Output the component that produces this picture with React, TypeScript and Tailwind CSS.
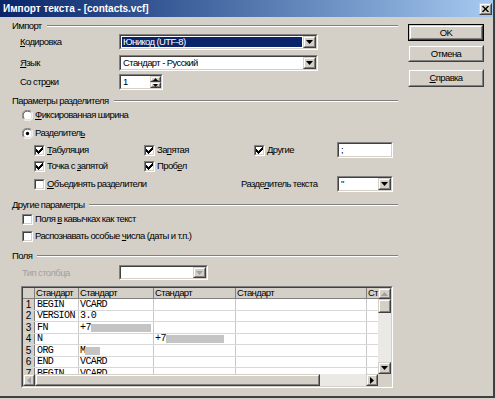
import React from "react";

type P = { className?: string; innerClass?: string; children?: React.ReactNode };

function Raised({ className = "", innerClass = "", children }: P) {
  return (
    <div className={`border border-t-[#d4d0c8] border-l-[#d4d0c8] border-b-[#404040] border-r-[#404040] ${className}`}>
      <div className={`w-full h-full border border-t-white border-l-white border-b-[#808080] border-r-[#808080] bg-[#d4d0c8] flex items-center justify-center ${innerClass}`}>
        {children}
      </div>
    </div>
  );
}

function Sunken({ className = "", innerClass = "", children }: P) {
  return (
    <div className={`border border-t-[#808080] border-l-[#808080] border-b-white border-r-white ${className}`}>
      <div className={`w-full h-full border border-t-[#404040] border-l-[#404040] border-b-[#d4d0c8] border-r-[#d4d0c8] ${innerClass}`}>
        {children}
      </div>
    </div>
  );
}

function Down({ grey = false }: { grey?: boolean }) {
  return (
    <svg width="7" height="4" viewBox="0 0 7 4">
      <polygon points="0,0 7,0 3.5,4" fill={grey ? "#a0a0a0" : "#000"} />
    </svg>
  );
}
function Up({ grey = false }: { grey?: boolean }) {
  return (
    <svg width="7" height="4" viewBox="0 0 7 4">
      <polygon points="0,4 7,4 3.5,0" fill={grey ? "#a0a0a0" : "#000"} />
    </svg>
  );
}
function Left({ grey = false }: { grey?: boolean }) {
  return (
    <svg width="4" height="7" viewBox="0 0 4 7">
      <polygon points="4,0 4,7 0,3.5" fill={grey ? "#a0a0a0" : "#000"} />
    </svg>
  );
}
function Right({ grey = false }: { grey?: boolean }) {
  return (
    <svg width="4" height="7" viewBox="0 0 4 7">
      <polygon points="0,0 0,7 4,3.5" fill={grey ? "#a0a0a0" : "#000"} />
    </svg>
  );
}

function Checkbox({ checked = false }: { checked?: boolean }) {
  return (
    <Sunken className="w-[11px] h-[11px] shrink-0" innerClass="bg-white flex items-center justify-center">
      {checked && (
        <svg width="7" height="7" viewBox="0 0 7 7" shapeRendering="crispEdges">
          <polygon points="0,2 2,4 7,-1 7,2 2,7 0,5" fill="#000" />
        </svg>
      )}
    </Sunken>
  );
}

function Radio({ checked = false }: { checked?: boolean }) {
  return (
    <svg width="11" height="11" viewBox="0 0 12 12" className="shrink-0">
      <circle cx="6" cy="6" r="5.5" fill="#fff" />
      <path d="M10.2 1.8 A5.5 5.5 0 0 0 1.8 10.2" fill="none" stroke="#808080" strokeWidth="1" />
      <path d="M9.4 2.6 A4.5 4.5 0 0 0 2.6 9.4" fill="none" stroke="#404040" strokeWidth="1" />
      <path d="M1.8 10.2 A5.5 5.5 0 0 0 10.2 1.8" fill="none" stroke="#ffffff" strokeWidth="1" />
      <path d="M2.6 9.4 A4.5 4.5 0 0 0 9.4 2.6" fill="none" stroke="#d4d0c8" strokeWidth="1" />
      {checked && <circle cx="6" cy="6" r="1.8" fill="#000" />}
    </svg>
  );
}

function Section({ label }: { label: string }) {
  return (
    <div className="flex items-center h-[14px] pl-[12px]">
      <span className="whitespace-nowrap">{label}</span>
      <div className="flex-1 ml-[5px] h-[2px] border-t border-t-[#808080] border-b border-b-white" />
    </div>
  );
}

const rows: { n: number; c1: string; c2: React.ReactNode; c3?: React.ReactNode; h: string }[] = [
  { n: 1, c1: "BEGIN", c2: "VCARD", h: "h-[12px]" },
  { n: 2, c1: "VERSION", c2: "3.0", h: "h-[11px]" },
  {
    n: 3,
    c1: "FN",
    c2: (
      <span className="flex items-center">
        +7<span className="ml-[0px] w-[60px] h-[8px] bg-[#c4c4c4] inline-block" />
      </span>
    ),
    h: "h-[12px]",
  },
  {
    n: 4,
    c1: "N",
    c2: "",
    c3: (
      <span className="flex items-center">
        +7<span className="w-[58px] h-[8px] bg-[#c4c4c4] inline-block" />
      </span>
    ),
    h: "h-[11px]",
  },
  {
    n: 5,
    c1: "ORG",
    c2: (
      <span className="flex items-center">
        M<span className="w-[15px] h-[8px] bg-[#c4c4c4] inline-block" />
      </span>
    ),
    h: "h-[12px]",
  },
  { n: 6, c1: "END", c2: "VCARD", h: "h-[11px]" },
  { n: 7, c1: "BEGIN", c2: "VCARD", h: "h-[12px]" },
];

const mono = "font-['Liberation_Mono','Courier_New',monospace] text-[10px] tracking-[-0.6px]";

export default function App() {
  return (
    <div className="w-[496px] h-[400px] bg-[#d4d0c8] overflow-hidden font-['Liberation_Sans',Arial,sans-serif] text-[9.5px] tracking-[-0.6px] text-black leading-none">
      <div className="w-[495px] h-[398px] border-r-2 border-r-[#404040] border-b-2 border-b-[#404040] flex flex-col">
        {/* Title bar */}
        <div className="h-[17px] shrink-0 bg-linear-to-r from-[#0a246a] to-[#a6caf0] flex items-center justify-between pl-[3px] pr-[1px]">
          <span className="text-white font-bold text-[10px] tracking-normal whitespace-nowrap">Импорт текста - [contacts.vcf]</span>
          <Raised className="w-[13px] h-[12px]" innerClass="">
            <svg width="7" height="6" viewBox="0 0 7 6">
              <path d="M0.5 0 L6.5 6 M6.5 0 L0.5 6" stroke="#000" strokeWidth="1.4" />
            </svg>
          </Raised>
        </div>

        <div className="flex flex-1">
          {/* Left content */}
          <div className="w-[398px] flex flex-col">
            <div className="mt-[2px]">
              <Section label="Импорт" />
            </div>

            <div className="flex items-center h-[16px] mt-[1px]">
              <span className="pl-[20px] w-[119px]">
                <span className="underline">К</span>одировка
              </span>
              <Sunken className="w-[199px] h-[16px]" innerClass="bg-white flex">
                <div className="flex-1 m-[1px] bg-[#0a246a] text-white flex items-center pl-[1px]">Юникод (UTF-8)</div>
                <Raised className="w-[13px] h-full">
                  <Down />
                </Raised>
              </Sunken>
            </div>

            <div className="flex items-center h-[16px] mt-[5px]">
              <span className="pl-[20px] w-[119px]">
                <span className="underline">Я</span>зык
              </span>
              <Sunken className="w-[199px] h-[16px]" innerClass="bg-white flex">
                <div className="flex-1 m-[1px] flex items-center pl-[1px]">Стандарт - Русский</div>
                <Raised className="w-[13px] h-full">
                  <Down />
                </Raised>
              </Sunken>
            </div>

            <div className="flex items-center h-[16px] mt-[3px]">
              <span className="pl-[20px] w-[119px]">
                Со стр<span className="underline">о</span>ки
              </span>
              <Sunken className="w-[44px] h-[16px]" innerClass="bg-white flex">
                <div className="flex-1 flex items-center pl-[2px]">1</div>
                <div className="w-[11px] flex flex-col">
                  <Raised className="w-full h-[6px]">
                    <svg width="5" height="3" viewBox="0 0 5 3">
                      <polygon points="0,3 5,3 2.5,0" fill="#000" />
                    </svg>
                  </Raised>
                  <Raised className="w-full h-[6px]">
                    <svg width="5" height="3" viewBox="0 0 5 3">
                      <polygon points="0,0 5,0 2.5,3" fill="#000" />
                    </svg>
                  </Raised>
                </div>
              </Sunken>
            </div>

            <div className="mt-[4px]">
              <Section label="Параметры разделителя" />
            </div>

            <div className="flex items-center h-[14px] pl-[22px] gap-[2px]">
              <Radio />
              <span>
                <span className="underline">Ф</span>иксированная ширина
              </span>
            </div>
            <div className="flex items-center h-[14px] mt-[4px] pl-[22px] gap-[2px]">
              <Radio checked />
              <span>
                Разделител<span className="underline">ь</span>
              </span>
            </div>

            <div className="flex items-center h-[16px] mt-[2px] pl-[34px]">
              <div className="w-[110px] flex items-center gap-[2px]">
                <Checkbox checked />
                <span>
                  <span className="underline">Т</span>абуляция
                </span>
              </div>
              <div className="w-[110px] flex items-center gap-[2px]">
                <Checkbox checked />
                <span>
                  За<span className="underline">п</span>ятая
                </span>
              </div>
              <div className="w-[83px] flex items-center gap-[2px]">
                <Checkbox checked />
                <span>
                  <span className="underline">Д</span>ругие
                </span>
              </div>
              <Sunken className="w-[56px] h-[16px]" innerClass="bg-white flex items-center pl-[2px]">
                ;
              </Sunken>
            </div>

            <div className="flex items-center h-[16px] pl-[34px]">
              <div className="w-[110px] flex items-center gap-[2px]">
                <Checkbox checked />
                <span>
                  Точка с <span className="underline">з</span>апятой
                </span>
              </div>
              <div className="w-[110px] flex items-center gap-[2px]">
                <Checkbox checked />
                <span>
                  Проб<span className="underline">е</span>л
                </span>
              </div>
            </div>

            <div className="flex items-center h-[16px] mt-[2px] pl-[34px]">
              <div className="w-[207px] flex items-center gap-[2px]">
                <Checkbox />
                <span>
                  <span className="underline">О</span>бъединять разделители
                </span>
              </div>
              <span className="w-[96px]">
                Разде<span className="underline">л</span>итель текста
              </span>
              <Sunken className="w-[56px] h-[16px]" innerClass="bg-white flex">
                <div className="flex-1 flex items-start pl-[2px] pt-[1px]">"</div>
                <Raised className="w-[13px] h-full">
                  <Down />
                </Raised>
              </Sunken>
            </div>

            <div className="mt-[6px]">
              <Section label="Другие параметры" />
            </div>
            <div className="flex items-center h-[14px] pl-[22px] gap-[2px]">
              <Checkbox />
              <span>
                Поля <span className="underline">в</span> кавычках как текст
              </span>
            </div>
            <div className="flex items-center h-[14px] mt-[3px] pl-[22px] gap-[2px]">
              <Checkbox />
              <span>
                Распознавать особые <span className="underline">ч</span>исла (даты и т.п.)
              </span>
            </div>

            <div className="mt-[6px]">
              <Section label="Поля" />
            </div>
            <div className="flex items-center h-[15px] mt-[2px]">
              <span className="pl-[22px] w-[119px] text-[#a0a0a0]">Тип столбца</span>
              <Sunken className="w-[89px] h-[15px]" innerClass="bg-white flex">
                <div className="flex-1" />
                <Raised className="w-[13px] h-full">
                  <Down grey />
                </Raised>
              </Sunken>
            </div>

            {/* Table */}
            <Sunken className="ml-[21px] mt-[6px] w-[372px] h-[102px]" innerClass="flex bg-white overflow-hidden">
              <div className="w-[355px] flex flex-col">
                <div className="h-[11px] flex shrink-0 bg-[#d4d0c8] border-b border-b-[#808080]">
                  <div className="w-[12px] border-r border-r-[#808080]" />
                  <div className="w-[44px] border-r border-r-[#808080] pl-[1px] flex items-center overflow-hidden whitespace-nowrap">Стандарт</div>
                  <div className="w-[75px] border-r border-r-[#808080] pl-[1px] flex items-center overflow-hidden whitespace-nowrap">Стандарт</div>
                  <div className="w-[82px] border-r border-r-[#808080] pl-[1px] flex items-center overflow-hidden whitespace-nowrap">Стандарт</div>
                  <div className="w-[131px] border-r border-r-[#808080] pl-[1px] flex items-center overflow-hidden whitespace-nowrap">Стандарт</div>
                  <div className="w-[11px] pl-[1px] flex items-center overflow-hidden whitespace-nowrap">Ст</div>
                </div>
                <div className="h-[75px] overflow-hidden flex flex-col shrink-0">
                  {rows.map((r) => (
                    <div key={r.n} className={`${r.h} flex shrink-0 border-b border-b-[#d8d8d8]`}>
                      <div className="w-[12px] bg-[#d4d0c8] border-r border-r-[#808080] flex items-center justify-center text-[10px] tracking-normal">{r.n}</div>
                      <div className={`w-[44px] border-r border-r-[#c8c8c8] pl-[2px] flex items-center whitespace-nowrap overflow-hidden ${mono}`}>{r.c1}</div>
                      <div className={`w-[75px] border-r border-r-[#c8c8c8] pl-[1px] flex items-center whitespace-nowrap overflow-hidden ${mono}`}>{r.c2}</div>
                      <div className={`w-[82px] border-r border-r-[#c8c8c8] pl-[1px] flex items-center whitespace-nowrap overflow-hidden ${mono}`}>{r.c3}</div>
                      <div className="w-[131px] border-r border-r-[#c8c8c8]" />
                      <div className="w-[11px]" />
                    </div>
                  ))}
                </div>
                {/* Horizontal scrollbar */}
                <div className="h-[12px] flex shrink-0 bg-[#ebe9e5]">
                  <Raised className="w-[12px] h-full">
                    <Left grey />
                  </Raised>
                  <Raised className="w-[285px] h-full" />
                  <div className="flex-1" />
                  <Raised className="w-[12px] h-full">
                    <Right />
                  </Raised>
                </div>
              </div>
              {/* Vertical scrollbar */}
              <div className="w-[13px] flex flex-col bg-[#ebe9e5]">
                <Raised className="w-full h-[11px] shrink-0">
                  <Up grey />
                </Raised>
                <Raised className="w-full h-[14px] shrink-0" />
                <div className="flex-1" />
                <Raised className="w-full h-[12px] shrink-0">
                  <Down />
                </Raised>
                <div className="h-[12px] shrink-0 bg-[#d4d0c8]" />
              </div>
            </Sunken>
          </div>

          {/* Right buttons */}
          <div className="ml-[10px] w-[76px] pt-[7px] flex flex-col">
            <div className="h-[17px] border border-black">
              <Raised className="w-full h-full">OK</Raised>
            </div>
            <Raised className="w-full h-[17px] mt-[4px]">Отмена</Raised>
            <Raised className="w-full h-[18px] mt-[7px]">
              <span>
                <span className="underline">С</span>правка
              </span>
            </Raised>
          </div>
        </div>
      </div>
    </div>
  );
}
